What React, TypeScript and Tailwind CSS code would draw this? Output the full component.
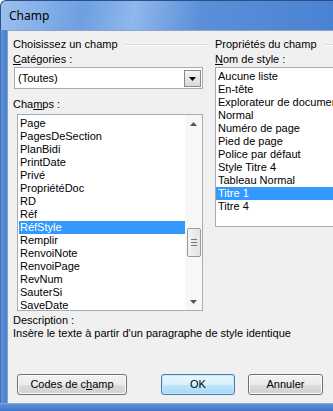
import React from "react";

const champs = [
  "Page",
  "PagesDeSection",
  "PlanBidi",
  "PrintDate",
  "Privé",
  "PropriétéDoc",
  "RD",
  "Réf",
  "RéfStyle",
  "Remplir",
  "RenvoiNote",
  "RenvoiPage",
  "RevNum",
  "SauterSi",
  "SaveDate",
];

const styles = [
  "Aucune liste",
  "En-tête",
  "Explorateur de documents",
  "Normal",
  "Numéro de page",
  "Pied de page",
  "Police par défaut",
  "Style Titre 4",
  "Tableau Normal",
  "Titre 1",
  "Titre 4",
];

function GroupHeader({ label }: { label: string }) {
  return (
    <div className="flex items-center h-[13px]">
      <span className="whitespace-nowrap">{label}</span>
      <div className="flex-1 ml-[6px] border-t border-[#d5dfe5] border-b border-b-white" />
    </div>
  );
}

function Btn({ children, primary, w }: { children: React.ReactNode; primary?: boolean; w: string }) {
  return (
    <div
      className={`${w} h-[21px] rounded-[3px] border flex items-center justify-center ${
        primary
          ? "border-[#3c7fb1] bg-[linear-gradient(#eaf6fd_0%,#d9f0fc_50%,#bee6fd_50%,#a7d9f5_100%)] shadow-[inset_0_0_0_1px_#c7e8f9]"
          : "border-[#707070] bg-[linear-gradient(#f2f2f2_0%,#ebebeb_50%,#dddddd_50%,#cfcfcf_100%)] shadow-[inset_0_0_0_1px_#fbfbfb]"
      }`}
    >
      {children}
    </div>
  );
}

export default function App() {
  return (
    <div
      className="w-[333px] h-[411px] overflow-hidden bg-[#4a7fcf] text-[11px] leading-[13px] text-black flex flex-col rounded-tl-[6px]"
      style={{ fontFamily: '"Liberation Sans", Arial, sans-serif' }}
    >
      {/* title bar */}
      <div className="h-[30px] shrink-0 flex items-center pl-[8px] bg-[linear-gradient(100deg,#9cc0ee_0%,#6e9fe2_25%,#8fb8ec_40%,#5b8fd9_60%,#4a82d2_100%)] border-t border-l border-[#2e4f84] rounded-tl-[6px]">
        <span className="text-[12px] text-black" style={{ fontFamily: '"Noto Sans", "Liberation Sans", sans-serif' }}>
          Champ
        </span>
      </div>

      <div className="flex flex-1">
        {/* left frame */}
        <div className="w-[7px] shrink-0 bg-[linear-gradient(90deg,#2e4f84_0px,#5d93dc_1px,#4a82d2_6px)]" />
        {/* client */}
        <div className="flex-1 flex flex-col bg-[#f0f0f0] border-l border-t border-[#8fa4c4] pl-[5px] pt-[7px]">
          <div className="flex">
            {/* left column */}
            <div className="w-[194px] shrink-0 flex flex-col">
              <GroupHeader label="Choisissez un champ" />
              <div className="mt-[2px] h-[13px]">
                <span className="underline">C</span>atégories :
              </div>
              <div className="mt-[1px] ml-[1px] w-[189px] h-[22px] bg-white border border-[#a5acb5] flex items-center relative">
                <span className="pl-[3px]">(Toutes)</span>
                <div className="absolute right-[1px] top-[2px] w-[17px] h-[17px] border border-[#8a8a8a] bg-[linear-gradient(#f4f4f4,#d9d9d9)] flex items-center justify-center">
                  <svg width="7" height="4" viewBox="0 0 7 4">
                    <path d="M0 0h7L3.5 4z" fill="#000" />
                  </svg>
                </div>
              </div>
              <div className="mt-[9px] h-[13px]">
                Cha<span className="underline">m</span>ps :
              </div>
              <div className="mt-[3px] ml-[4px] w-[186px] h-[197px] bg-white border border-[#a5acb5] flex">
                <div className="flex-1 pl-[1px] pt-[2px] overflow-hidden">
                  {champs.map((c) => (
                    <div
                      key={c}
                      className={`h-[13px] pl-[1px] whitespace-nowrap ${
                        c === "RéfStyle" ? "bg-[#3399ff] text-white" : ""
                      }`}
                    >
                      {c}
                    </div>
                  ))}
                </div>
                <div className="w-[17px] shrink-0 bg-[#f7f7f7] flex flex-col items-center relative">
                  <div className="h-[17px] flex items-center justify-center">
                    <svg width="7" height="4" viewBox="0 0 7 4">
                      <path d="M3.5 0L7 4H0z" fill="#555" />
                    </svg>
                  </div>
                  <div className="mt-[96px] w-[14px] h-[29px] rounded-[2px] border border-[#9a9a9a] bg-[linear-gradient(90deg,#f2f2f2,#e4e4e4)] flex flex-col items-center justify-center gap-[2px]">
                    <div className="w-[6px] h-[1px] bg-[#777]" />
                    <div className="w-[6px] h-[1px] bg-[#777]" />
                    <div className="w-[6px] h-[1px] bg-[#777]" />
                  </div>
                  <div className="flex-1" />
                  <div className="h-[17px] flex items-center justify-center">
                    <svg width="7" height="4" viewBox="0 0 7 4">
                      <path d="M0 0h7L3.5 4z" fill="#555" />
                    </svg>
                  </div>
                </div>
              </div>
            </div>

            {/* right column */}
            <div className="ml-[8px] w-[130px] shrink-0 flex flex-col">
              <GroupHeader label="Propriétés du champ" />
              <div className="mt-[2px] h-[13px]">
                <span className="underline">N</span>om de style :
              </div>
              <div className="mt-[1px] h-[160px] bg-white border border-[#a5acb5] pt-[2px] overflow-hidden">
                {styles.map((s) => (
                  <div
                    key={s}
                    className={`h-[13px] pl-[2px] whitespace-nowrap ${
                      s === "Titre 1" ? "bg-[#3399ff] text-white" : ""
                    }`}
                  >
                    {s}
                  </div>
                ))}
              </div>
            </div>
          </div>

          <div className="mt-[3px] h-[13px]">Description :</div>
          <div className="h-[13px] whitespace-nowrap">
            Insère le texte à partir d'un paragraphe de style identique
          </div>

          <div className="mt-[34px] flex">
            <div className="ml-[4px]">
              <Btn w="w-[110px]">
                Codes de c<span className="underline">h</span>amp
              </Btn>
            </div>
            <div className="ml-[34px]">
              <Btn w="w-[74px]" primary>
                OK
              </Btn>
            </div>
            <div className="ml-[13px]">
              <Btn w="w-[75px]">Annuler</Btn>
            </div>
          </div>
        </div>
      </div>
      {/* bottom frame */}
      <div className="h-[8px] shrink-0 bg-[linear-gradient(#5d93dc,#3f75c6)] border-t border-[#8fa4c4]" />
    </div>
  );
}
